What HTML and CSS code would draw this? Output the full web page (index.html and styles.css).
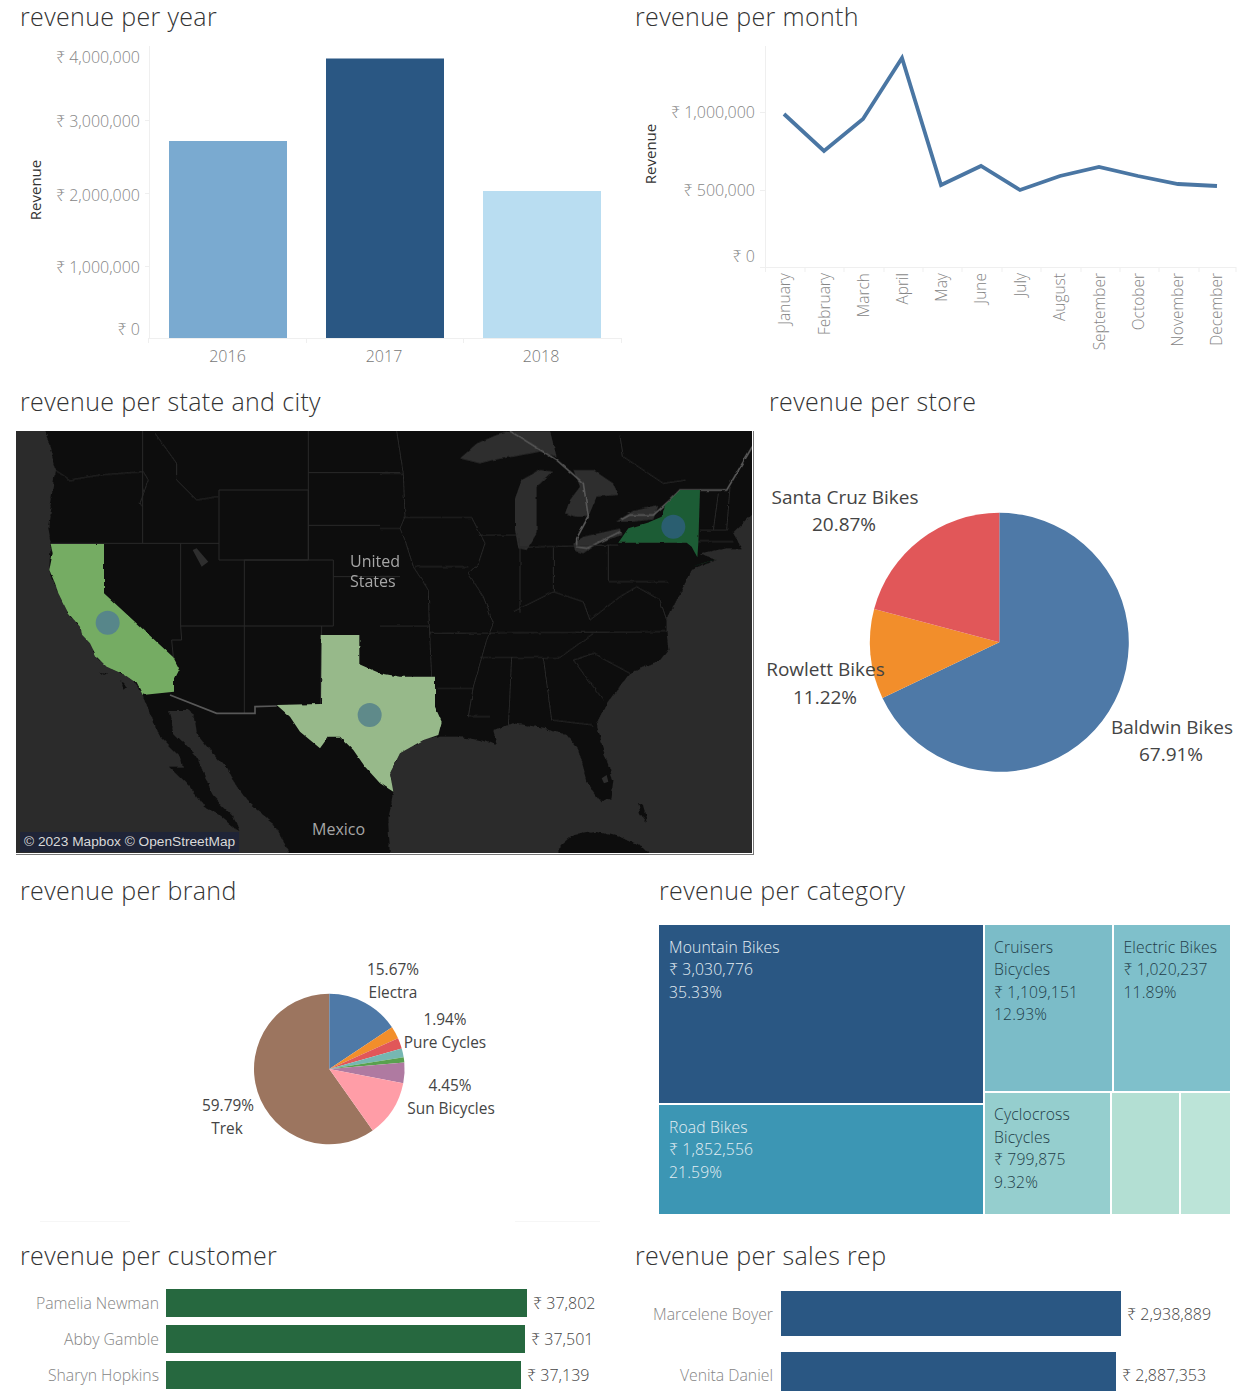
FILE: index.html
```html
<!DOCTYPE html>
<html lang="en">
<head>
<meta charset="utf-8">
<title>Revenue dashboard</title>
<link rel="stylesheet" href="styles.css">
</head>
<body>
<main class="dash">

<section class="row row-a">
  <div class="panel">
    <h2 class="title">revenue per year</h2>
    <svg class="chart" viewBox="0 36 615 349" width="615" height="349">
      <path class="grid" d="M149.5 46V338.5M145 120.5H149M145 193.5H149M145 266.5H149M149 338.5H622M148.5 338V343M306.5 338V343M463.5 338V343M621.5 338V343"/>
      <rect x="169" y="141" width="118" height="197" fill="#7aaad0"/>
      <rect x="326" y="58.5" width="118" height="279.5" fill="#2a5783"/>
      <rect x="483" y="191" width="118" height="147" fill="#b9ddf1"/>
      <g class="tick end">
        <text x="140" y="63">₹ 4,000,000</text>
        <text x="140" y="127">₹ 3,000,000</text>
        <text x="140" y="201">₹ 2,000,000</text>
        <text x="140" y="273">₹ 1,000,000</text>
        <text x="140" y="335">₹ 0</text>
      </g>
      <g class="tick mid">
        <text x="227.5" y="362">2016</text>
        <text x="384" y="362">2017</text>
        <text x="541" y="362">2018</text>
      </g>
      <text class="axis-title" transform="translate(41 190) rotate(-90)">Revenue</text>
    </svg>
  </div>
  <div class="panel">
    <h2 class="title">revenue per month</h2>
    <svg class="chart" viewBox="615 36 634 349" width="634" height="349">
      <path class="grid" d="M765.5 46V267.5M760 112.5H765M760 190.5H765M760 267.5H1236M765.5 267V272M805 267V272M844 267V272M884 267V272M923 267V272M962 267V272M1002 267V272M1041 267V272M1081 267V272M1120 267V272M1159 267V272M1199 267V272M1236 267V272"/>
      <polyline class="line" points="784,114 824,151 863,119 902,58 941,185 981,166 1020,190 1060,176 1099,167 1138,176 1178,184 1217,186"/>
      <g class="tick end">
        <text x="755" y="118">₹ 1,000,000</text>
        <text x="755" y="196">₹ 500,000</text>
        <text x="755" y="262">₹ 0</text>
      </g>
      <g class="tick end month">
        <text transform="translate(790 273) rotate(-90)">January</text>
        <text transform="translate(830 273) rotate(-90)">February</text>
        <text transform="translate(869 273) rotate(-90)">March</text>
        <text transform="translate(908 273) rotate(-90)">April</text>
        <text transform="translate(947 273) rotate(-90)">May</text>
        <text transform="translate(986 273) rotate(-90)">June</text>
        <text transform="translate(1026 273) rotate(-90)">July</text>
        <text transform="translate(1065 273) rotate(-90)">August</text>
        <text transform="translate(1105 273) rotate(-90)">September</text>
        <text transform="translate(1144 273) rotate(-90)">October</text>
        <text transform="translate(1183 273) rotate(-90)">November</text>
        <text transform="translate(1222 273) rotate(-90)">December</text>
      </g>
      <text class="axis-title" transform="translate(656 154) rotate(-90)">Revenue</text>
    </svg>
  </div>
</section>

<section class="row row-b">
  <div class="panel">
    <h2 class="title">revenue per state and city</h2>
    <div class="map">
      <svg class="map-art" viewBox="48 33 2208 1266" width="736" height="422">
        <defs>
          <filter id="rough" filterUnits="userSpaceOnUse" x="48" y="33" width="2208" height="1266">
            <feTurbulence type="fractalNoise" baseFrequency="0.035" numOctaves="3" seed="4" result="jag"/>
            <feDisplacementMap in="SourceGraphic" in2="jag" scale="14" xChannelSelector="R" yChannelSelector="G"/>
          </filter>
          <filter id="wiggle" filterUnits="userSpaceOnUse" x="48" y="33" width="2208" height="1266">
            <feTurbulence type="fractalNoise" baseFrequency="0.04" numOctaves="2" seed="9" result="jag"/>
            <feDisplacementMap in="SourceGraphic" in2="jag" scale="8" xChannelSelector="R" yChannelSelector="G"/>
          </filter>
        </defs>
        <rect x="48" y="33" width="2208" height="1266" fill="#2b2b2b"/>
        <g filter="url(#rough)">
          <path class="land" d="M135 33L150 80 165 150 155 230 145 320 152 372 148 450 175 520 205 580 240 620 270 670 290 710 320 740 375 765 410 790 428 825 450 880 480 950 540 1010 545 1040 510 1040 560 1090 615 1160 660 1190 700 1225 718 1232 700 1190 640 1130 620 1080 590 1010 560 980 520 940 510 870 560 870 585 890 590 940 640 1000 680 1045 720 1110 760 1160 820 1210 875 1310H1170L1165 1200 1180 1115 1170 1060 1200 1000 1270 960 1320 950 1370 950 1440 960 1490 975 1480 930 1540 910 1640 925 1700 945 1730 980 1745 1020 1760 1090 1805 1147 1835 1135 1840 1080 1810 990 1790 910 1820 850 1890 760 1980 720 2005 690 2000 640 2000 600 2040 520 2075 450 2150 420 2100 400 2180 385 2225 385 2200 340 2270 270V20H120Z"/>
          <path class="land" d="M1675 1285L1720 1245 1790 1235 1860 1250 1940 1290 1950 1310H1675ZM1915 1150L1930 1160 1940 1205 1920 1180ZM300 755L325 760 315 765ZM365 780L380 800 370 810Z"/>
        </g>
        <path class="lake" d="M578 390L590 385 625 425 605 440ZM1805 1075L1820 1065 1825 1085 1812 1090Z"/>
        <g filter="url(#wiggle)">
          <g transform="translate(1140)">
            <path class="lake" d="M240 115L290 70 350 45 400 33H510L530 110 480 95 400 110 340 120 300 130ZM405 235L425 180 480 150 520 155 470 200 470 340 440 390 415 385 405 330ZM580 150L640 150 700 190 715 225 650 230 625 290 590 290 555 280 570 240 600 200ZM580 370L610 350 720 325 725 345 650 372 610 400 585 392ZM708 305L760 272 835 258 820 298 760 305Z"/>
            <path class="frontier" d="M390 33L530 120 610 190 625 290 590 355V380L620 385 720 335M725 298L750 285 820 285 870 240 900 210H1040L1117 80"/>
            <path class="border" d="M50 33L70 160 75 290 60 325 75 360 100 440 145 510 148 620 155 770M0 160H70M70 292H275L315 370 295 430 265 460 310 530 340 610 320 660 280 800 265 890H330M0 325H60M0 470H30M105 440H265M300 345H415L420 385V580M420 382L685 375V485H865M685 375H715M520 382V515M400 575L520 515 610 545 630 600 720 530 770 500 840 540 860 600M0 618H148M150 640L860 635M300 712H540L640 640M395 712L385 920M490 712L515 900 640 915M580 720L640 700 750 760M580 720L670 840M165 805H280M960 330H1040L1050 200M1000 330L1015 220M950 365H1060M720 50L730 110 850 190 920 180"/>
          </g>
          <path class="border" d="M165 150L210 180 300 165 430 155 445 180 420 250 428 260M465 40L530 130V180L590 240 655 230"/>
        </g>
        <path class="border" d="M428 33V370M152 370H657M542 370V618H1000M542 618L545 660H515L520 712M657 210H925V420H657ZM733 420V880M925 33V420M925 158H1200M925 316H1140M733 420H1000V618M1000 470H1200M965 618L962 852"/>
        <path class="frontier" d="M510 825L650 880H765V860L830 858"/>
        <g filter="url(#wiggle)">
          <path fill="#74ac63" d="M152 372H312V520L520 712 537 745 522 775 522 815 428 825 410 790 375 765 320 740 290 710 270 670 242 640 240 620 205 580 175 520 165 490 148 450 158 400Z"/>
          <path fill="#97b98a" d="M965 645H1078V733L1140 760 1200 770 1305 770V860L1325 905 1315 945 1270 960 1200 1000 1170 1060 1180 1115 1140 1090 1095 1040 1060 990 1020 950 985 950 960 985 900 935 870 890 830 855 963 852Z"/>
          <path fill="#1f5c35" d="M1855 368L1885 325 1950 305 1985 290 1995 255 2040 210H2100L2095 370 2092 412 2075 380 2060 368ZM2075 440L2155 415 2110 430Z"/>
        </g>
        <circle cx="323" cy="608" r="36" fill="#57868a"/>
        <circle cx="1109" cy="885" r="36" fill="#5f8a8a"/>
        <circle cx="2020" cy="320" r="36" fill="#2a5e70"/>
      </svg>
      <span class="map-label map-us">United<br>States</span>
      <span class="map-label map-mx">Mexico</span>
      <span class="map-credit">© 2023 Mapbox © OpenStreetMap</span>
    </div>
  </div>
  <div class="panel">
    <h2 class="title title-tight">revenue per store</h2>
    <svg class="chart" viewBox="755 421 494 453" width="494" height="453">
      <path fill="#4e79a7" d="M999.3 642.3V512.8A129.5 129.5 0 1 1 882.44 698.09Z"/>
      <path fill="#f28e2b" d="M999.3 642.3L882.44 698.09A129.5 129.5 0 0 1 874.14 609.07Z"/>
      <path fill="#e15759" d="M999.3 642.3L874.14 609.07A129.5 129.5 0 0 1 999.3 512.8Z"/>
      <g class="pie-big">
        <text x="845" y="504">Santa Cruz Bikes</text>
        <text x="844" y="531">20.87%</text>
        <text x="825.5" y="676">Rowlett Bikes</text>
        <text x="825" y="704">11.22%</text>
        <text x="1172" y="734">Baldwin Bikes</text>
        <text x="1171" y="761">67.91%</text>
      </g>
    </svg>
  </div>
</section>

<section class="row row-c">
  <div class="panel">
    <h2 class="title">revenue per brand</h2>
    <svg class="chart" viewBox="0 910 639 329" width="639" height="329">
      <path fill="#9c755f" d="M329.3 1069L372.74 1130.5A75.3 75.3 0 1 1 329.3 993.7Z"/>
      <path fill="#4e79a7" d="M329.3 1069V993.7A75.3 75.3 0 0 1 392.03 1027.35Z"/>
      <path fill="#f28e2b" d="M329.3 1069L392.03 1027.35A75.3 75.3 0 0 1 398.03 1038.23Z"/>
      <path fill="#e15759" d="M329.3 1069L398.03 1038.23A75.3 75.3 0 0 1 401.74 1048.44Z"/>
      <path fill="#76b7b2" d="M329.3 1069L401.74 1048.44A75.3 75.3 0 0 1 403.67 1057.22Z"/>
      <path fill="#59a14f" d="M329.3 1069L403.67 1057.22A75.3 75.3 0 0 1 404.31 1062.39Z"/>
      <path fill="#af7aa1" d="M329.3 1069L404.31 1062.39A75.3 75.3 0 0 1 403.22 1083.34Z"/>
      <path fill="#ff9da7" d="M329.3 1069L403.22 1083.34A75.3 75.3 0 0 1 372.74 1130.5Z"/>
      <path class="grid faint" d="M40 1221.5H130M515 1221.5H600"/>
      <g class="pie-small">
        <text x="393" y="975">15.67%</text>
        <text x="393" y="998">Electra</text>
        <text x="445" y="1025">1.94%</text>
        <text x="445" y="1048">Pure Cycles</text>
        <text x="450" y="1091">4.45%</text>
        <text x="451" y="1114">Sun Bicycles</text>
        <text x="228" y="1111">59.79%</text>
        <text x="227" y="1134">Trek</text>
      </g>
    </svg>
  </div>
  <div class="panel">
    <h2 class="title">revenue per category</h2>
    <div class="tree">
      <div class="tree-main">
        <div class="cell cell-mountain"><p>Mountain Bikes</p><p>₹ 3,030,776</p><p>35.33%</p></div>
        <div class="cell cell-road"><p>Road Bikes</p><p>₹ 1,852,556</p><p>21.59%</p></div>
      </div>
      <div class="tree-side">
        <div class="tree-top">
          <div class="cell dark cell-cruisers"><p>Cruisers</p><p>Bicycles</p><p>₹ 1,109,151</p><p>12.93%</p></div>
          <div class="cell dark cell-electric"><p>Electric Bikes</p><p>₹ 1,020,237</p><p>11.89%</p></div>
        </div>
        <div class="tree-bottom">
          <div class="cell dark cell-cyclo"><p>Cyclocross</p><p>Bicycles</p><p>₹ 799,875</p><p>9.32%</p></div>
          <div class="cell cell-comfort"></div>
          <div class="cell cell-kids"></div>
        </div>
      </div>
    </div>
  </div>
</section>

<section class="row row-d">
  <div class="panel">
    <h2 class="title">revenue per customer</h2>
    <div class="hbars hbars-customer">
      <div class="hbar"><span class="hbar-name">Pamelia Newman</span><span class="hbar-fill green" style="width:361px"></span><span class="hbar-value">₹ 37,802</span></div>
      <div class="hbar"><span class="hbar-name">Abby Gamble</span><span class="hbar-fill green" style="width:359px"></span><span class="hbar-value">₹ 37,501</span></div>
      <div class="hbar"><span class="hbar-name">Sharyn Hopkins</span><span class="hbar-fill green" style="width:355px"></span><span class="hbar-value">₹ 37,139</span></div>
    </div>
  </div>
  <div class="panel">
    <h2 class="title">revenue per sales rep</h2>
    <div class="hbars hbars-rep">
      <div class="hbar"><span class="hbar-name">Marcelene Boyer</span><span class="hbar-fill blue" style="width:340px"></span><span class="hbar-value">₹ 2,938,889</span></div>
      <div class="hbar"><span class="hbar-name">Venita Daniel</span><span class="hbar-fill blue" style="width:335px"></span><span class="hbar-value">₹ 2,887,353</span></div>
    </div>
  </div>
</section>

</main>
</body>
</html>
```
FILE: styles.css
```css
* { box-sizing: border-box; }
html, body { margin: 0; padding: 0; background: #fff; }
body {
  width: 1249px;
  height: 1391px;
  overflow: hidden;
  font-family: "Open Sans", "Noto Sans", sans-serif;
}
.dash { display: flex; flex-direction: column; }
.row { display: grid; }
.row-a { grid-template-columns: 615px 634px; height: 385px; }
.row-b { grid-template-columns: 755px 494px; height: 489px; }
.row-c { grid-template-columns: 639px 610px; height: 365px; }
.row-d { grid-template-columns: 615px 634px; height: 152px; }
.panel { min-width: 0; }
.title {
  margin: 0;
  padding-left: 20px;
  height: 36px;
  font-size: 25px;
  line-height: 33px;
  letter-spacing: 0.35px;
  font-weight: 300;
  color: #333;
  white-space: nowrap;
}
.title-tight { padding-left: 14px; }
.chart { display: block; overflow: visible; }
.grid { fill: none; stroke: #efefef; stroke-width: 1; }
.faint { stroke: #f6f6f6; }
.line { fill: none; stroke: #4a76a3; stroke-width: 3.8; stroke-linejoin: miter; }
.tick text { font-size: 16px; fill: #858585; font-weight: 300; }
.tick.end text { text-anchor: end; }
.tick.mid text { text-anchor: middle; fill: #777; }
.tick.month text { font-size: 15.5px; }
.axis-title { font-size: 15px; fill: #333; text-anchor: middle; }
.pie-big text { font-size: 19px; fill: #444; text-anchor: middle; }
.pie-small text { font-size: 15.4px; fill: #444; text-anchor: middle; }

.map {
  position: relative;
  margin: 10px 0 0 16px;
  width: 738px;
  height: 424px;
  background: #fff;
  border-right: 1px solid #777;
  border-bottom: 1px solid #777;
}
.map-art { display: block; }
.land { fill: #0f0f0f; }
.lake { fill: #2e2e2e; }
.border { fill: none; stroke: #2a2a2a; stroke-width: 3; }
.frontier { fill: none; stroke: #585858; stroke-width: 5; }
.map-label { position: absolute; color: #a6a6a6; font-size: 16px; line-height: 20px; }
.map-us { left: 334px; top: 120px; }
.map-mx { left: 296px; top: 388px; }
.map-credit {
  position: absolute;
  left: 4px;
  bottom: 2px;
  padding: 0 4px;
  height: 20px;
  background: #1f2437;
  color: #d9d9d9;
  font-family: "Liberation Sans", sans-serif;
  font-size: 13.7px;
  line-height: 20px;
  white-space: nowrap;
}

.tree { display: flex; gap: 1.5px; margin: 14.5px 0 0 20px; width: 571px; height: 289px; }
.tree-main { display: flex; flex-direction: column; gap: 1.5px; width: 324px; }
.tree-side { display: flex; flex-direction: column; gap: 1.5px; flex: 1; }
.tree-top { display: flex; gap: 2px; height: 166.5px; }
.tree-bottom { display: flex; gap: 2px; flex: 1; }
.cell { padding: 11px 9px 0 10px; color: #e4eef3; font-size: 15.7px; letter-spacing: 0.15px; font-weight: 300; }
.cell p { margin: 0; line-height: 22.6px; white-space: nowrap; }
.dark { color: #1f3d48; padding-left: 9.5px; }
.cell-mountain { height: 178.5px; background: #2a5783; }
.cell-road { flex: 1; background: #3c96b4; }
.cell-cruisers { width: 127.5px; background: #7bbcc8; }
.cell-electric { flex: 1; background: #7fc0cb; }
.cell-cyclo { width: 125px; background: #95cece; padding-top: 10.5px; }
.cell-comfort { width: 67px; background: #b3dfd3; }
.cell-kids { flex: 1; background: #bce4d8; }

.hbars { display: flex; flex-direction: column; }
.hbar { display: flex; align-items: center; }
.hbar-name {
  flex: none;
  text-align: right;
  color: #858585;
  font-size: 15.8px;
  font-weight: 300;
  white-space: nowrap;
}
.hbar-fill { flex: none; height: 100%; }
.hbar-value { flex: none; color: #444; font-size: 16px; margin-left: 6px; white-space: nowrap; font-weight: 300; }
.green { background: #26683f; }
.blue { background: #2a5783; }
.hbars-customer { padding-top: 14px; gap: 8px; }
.hbars-customer .hbar { height: 28px; }
.hbars-customer .hbar-name { width: 159px; margin-right: 7px; }
.hbars-rep { padding-top: 16px; gap: 16px; }
.hbars-rep .hbar { height: 45px; }
.hbars-rep .hbar-name { width: 158px; margin-right: 8px; }
```
